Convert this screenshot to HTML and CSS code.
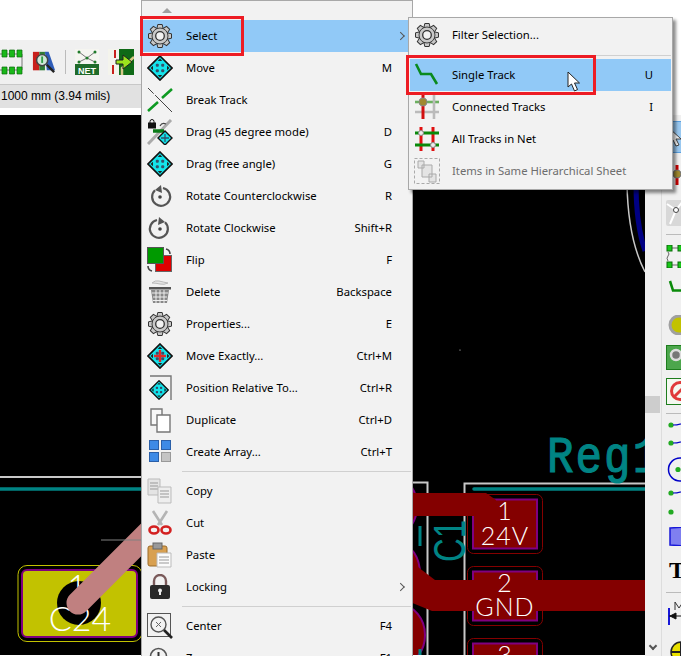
FILE: index.html
```html
<!doctype html>
<html>
<head>
<meta charset="utf-8">
<title>PCB editor - context menu</title>
<link rel="stylesheet" href="styles.css">
</head>
<body>
<!-- icons used more than once -->
<svg class="defs" width="0" height="0">
	<path id="tooth" d="M9.800 6 10.800 1.500H15.200L16.200 6Z"/>
	<symbol id="gear" viewBox="0 0 26 26">
		<g class="gear-teeth">
			<use href="#tooth"/>
			<use href="#tooth" transform="rotate(45 13 13)"/>
			<use href="#tooth" transform="rotate(90 13 13)"/>
			<use href="#tooth" transform="rotate(135 13 13)"/>
			<use href="#tooth" transform="rotate(180 13 13)"/>
			<use href="#tooth" transform="rotate(225 13 13)"/>
			<use href="#tooth" transform="rotate(270 13 13)"/>
			<use href="#tooth" transform="rotate(315 13 13)"/>
		</g>
		<circle cx="13" cy="13" r="8" class="gear-body"/>
		<circle cx="13" cy="13" r="4.300" class="gear-hole"/>
	</symbol>
	<symbol id="move" viewBox="0 0 26 26">
		<path d="M13 1 25 13 13 25 1 13Z" fill="#14e4ec" stroke="#111" stroke-width="1.700"/>
		<path d="M13 3.500 15.200 6H10.800ZM13 22.500 15.200 20H10.800ZM3.500 13 6 10.800V15.200ZM22.500 13 20 10.800V15.200Z" fill="#222"/>
		<rect x="8.800" y="8.800" width="3" height="3" rx="1" fill="#35506a"/>
		<rect x="14.200" y="8.800" width="3" height="3" rx="1" fill="#35506a"/>
		<rect x="8.800" y="14.200" width="3" height="3" rx="1" fill="#35506a"/>
		<rect x="14.200" y="14.200" width="3" height="3" rx="1" fill="#35506a"/>
	</symbol>
	<symbol id="spin" viewBox="0 0 26 26">
		<path d="M8 7.200A9 9 0 1 0 16 5" fill="none" stroke="#555" stroke-width="2.200"/>
		<circle cx="13" cy="14" r="1.800" fill="#444"/>
	</symbol>
	<symbol id="wire" viewBox="0 0 20 10">
		<circle cx="5" cy="5" r="2.600" fill="#22aa22"/>
		<path d="M7 5q6 0 13-3" fill="none" stroke="#0000c8" stroke-width="1.200"/>
	</symbol>
</svg>

<div class="app">
	<div class="top"></div>
	<div class="toolbar">
		<svg class="tool tool-cut" viewBox="0 0 23 26">
			<path d="M-2 5H22V21H-2" fill="none" stroke="#777"/>
			<path d="M2 1H7V8H2ZM9.500 1H14.500V8H9.500ZM17 1H22V8H17ZM2 18H7V25H2ZM9.500 18H14.500V25H9.500ZM17 18H22V25H17Z" fill="#1ab81a" stroke="#0a6a0a" stroke-width=".7"/>
		</svg>
		<svg class="tool" viewBox="0 0 26 26">
			<path d="M1 2H8V22H1Z" fill="#c8201c"/>
			<path d="M8 2H14V22H8Z" fill="#2f7d36"/>
			<path d="M14 2H18L25 22H16Z" fill="#2e5cb8"/>
			<circle cx="11" cy="11" r="6" fill="#cfe8d8" stroke="#444" stroke-width="1.600"/>
			<path d="M11 7V14" stroke="#2f9d46" stroke-width="2"/>
			<path d="M16 16 24 24" stroke="#222" stroke-width="2.600"/>
		</svg>
		<span class="tool-sep"></span>
		<svg class="tool" viewBox="0 0 24 26">
			<path d="M0 0H24V26H0Z" fill="#f5f5f0"/>
			<path d="M4 3 12 9 20 3M4 13 12 9 20 13" fill="none" stroke="#777"/>
			<circle cx="4" cy="3" r="1.500" fill="#1f7a2a"/><circle cx="20" cy="3" r="1.500" fill="#1f7a2a"/><circle cx="12" cy="9" r="1.500" fill="#1f7a2a"/><circle cx="4" cy="13" r="1.500" fill="#1f7a2a"/><circle cx="20" cy="13" r="1.500" fill="#1f7a2a"/>
			<path d="M0 15H24V26H0Z" fill="#1f6b2a"/>
			<text x="12" y="24.500" class="net-text">NET</text>
		</svg>
		<svg class="tool tool-wide" viewBox="0 0 26 26">
			<path d="M0 0H26V26H0Z" fill="#0f6a17"/>
			<path d="M0 0H11V26H0Z" fill="#f4f4ec"/>
			<path d="M7 1V9M5 16V25" stroke="#c8201c" stroke-width="2"/>
			<path d="M14 26V19L26 8" fill="none" stroke="#d8c98a" stroke-width="2.500"/>
			<path d="M8 11H15V6L24 13 15 20V15H8Z" fill="#9be21d" stroke="#222"/>
		</svg>
	</div>
	<div class="status">1000 mm (3.94 mils)</div>
	<div class="gap"></div>
	<div class="main">
		<svg class="board" viewBox="0 116 645 540">
			<rect x="0" y="116" width="645" height="540" fill="#000"/>
			<circle cx="460" cy="351" r=".6" fill="#ddd"/>
			<path d="M627 185Q628 240 645 273" fill="none" stroke="#c8c8c8" stroke-width="1.500"/>
			<path d="M636 185Q636 225 645 252" fill="none" stroke="#000084" stroke-width="5"/>

			<ellipse cx="400" cy="507" rx="17" ry="26" fill="#840000" stroke="#800080" stroke-width="2"/>
			<ellipse cx="400" cy="575" rx="20" ry="30" fill="#840000" stroke="#800080" stroke-width="2"/>
			<ellipse cx="400" cy="636" rx="25" ry="30" fill="#840000" stroke="#800080" stroke-width="2"/>
			<path d="M0 478H141M410 483.500H427.500V656M464.500 656V484.500H645" fill="none" stroke="#c8c8c8" stroke-width="2"/>
			<path d="M0 490H141M474 490H645" fill="none" stroke="#008484" stroke-width="3.500" stroke-linecap="round"/>
			<path d="M420 527V547M420 650V656" stroke="#008484" stroke-width="3"/>
			<text transform="translate(547 473) scale(.85 1)" class="reg">Reg1</text>
			<text transform="translate(465 563) rotate(-90) scale(.75 1)" class="ref">C1</text>

			<rect x="18" y="566.500" width="124" height="76" rx="9" fill="none" stroke="#c2c200"/>
			<rect x="22" y="571" width="115" height="67" rx="5" fill="#c2c200" stroke="#800080" stroke-width="2"/>
			<circle cx="79" cy="604" r="22" fill="#000"/>
			<text x="77" y="600" class="pad-text">1</text>
			<text x="80" y="632" class="pad-text">C24</text>
			<path d="M78 604 160 522" stroke="#c08080" stroke-width="23" stroke-linecap="round"/>
			<path d="M101 541H141" stroke="#808080"/>

			<rect x="467.500" y="495.500" width="75" height="59" rx="6" fill="none" stroke="#840000"/>
			<rect x="473" y="500.500" width="64" height="49" fill="#840000" stroke="#800080" stroke-width="2"/>
			<rect x="467.500" y="567.500" width="75" height="59" rx="6" fill="none" stroke="#840000"/>
			<rect x="473" y="572.500" width="64" height="49" fill="#840000" stroke="#800080" stroke-width="2"/>
			<rect x="467.500" y="639.500" width="75" height="59" rx="6" fill="none" stroke="#840000"/>
			<rect x="473" y="644.500" width="64" height="49" fill="#840000" stroke="#800080" stroke-width="2"/>
			<path d="M410 494H486L496 501V517H410Z" fill="#840000"/>
			<path d="M410 562 435 581H645V612H432L410 603Z" fill="#840000"/>
			<text x="505" y="521" class="pad-text small">1</text>
			<text x="505" y="546" class="pad-text small">24V</text>
			<text x="505" y="593" class="pad-text small">2</text>
			<text x="505" y="617" class="pad-text small">GND</text>
			<text x="505" y="665" class="pad-text small">3</text>
		</svg>
		<div class="scroll">
			<span class="thumb"></span>
			<span class="scroll-down"></span>
		</div>
		<div class="side"></div>
	</div>
</div>

<div class="sidetools">
	<span class="side-on">
		<svg class="cursor-mini" viewBox="0 0 14 20"><path d="M1 1V16L5 13 8 19 11 18 8 12H13Z" fill="#fff" stroke="#444"/></svg>
	</span>
	<svg class="st via-red" viewBox="0 0 20 20"><path d="M11 0V20" stroke="#c00" stroke-width="3"/><circle cx="11" cy="9" r="4" fill="#a08a30" stroke="#777"/></svg>
	<svg class="st tune" viewBox="0 0 20 26"><rect x="0" y="0" width="24" height="26" rx="2" fill="#d8d8d8"/><path d="M10 10 17 1M10 10 1 4M10 10 4 24" stroke="#fff" stroke-width="2"/><circle cx="10" cy="10" r="2.500" fill="#fff" stroke="#444"/></svg>
	<span class="side-sep sep-a"></span>
	<svg class="st foot" viewBox="0 0 20 23"><path d="M6 3H14M6 20H14M2 7Q4 9 2 11T2 16" fill="none" stroke="#666"/><rect x="1" y="0" width="5" height="6" fill="#18c818" stroke="#0a6a0a"/><rect x="1" y="17" width="5" height="6" fill="#18c818" stroke="#0a6a0a"/><rect x="12" y="0" width="9" height="6" fill="#18c818" stroke="#0a6a0a"/><rect x="12" y="17" width="9" height="6" fill="#18c818" stroke="#0a6a0a"/></svg>
	<svg class="st track" viewBox="0 0 20 12"><path d="M4 1 7 10.500H20" fill="none" stroke="#0a8a0a" stroke-width="2.500"/></svg>
	<svg class="st via" viewBox="0 0 20 20"><circle cx="13" cy="10" r="9" fill="#c2c200" stroke="#a0a0a0" stroke-width="3"/></svg>
	<svg class="st pad" viewBox="0 0 20 25"><rect x=".5" y=".5" width="24" height="24" fill="#4ca64c" stroke="#1d7d1d"/><circle cx="10" cy="10" r="5" fill="#777" stroke="#ddd" stroke-width="2.500"/></svg>
	<svg class="st nope" viewBox="0 0 20 27"><rect x=".5" y=".5" width="24" height="26" fill="#f4f8f0" stroke="#1d7d1d"/><circle cx="14" cy="13" r="8.500" fill="none" stroke="#e03a3a" stroke-width="3"/><path d="M8 19 20 7" stroke="#e03a3a" stroke-width="3"/></svg>
	<span class="side-sep sep-b"></span>
	<svg class="st wire wire-a"><use href="#wire"/></svg>
	<svg class="st wire"><use href="#wire"/></svg>
	<svg class="st ring" viewBox="0 0 20 25"><circle cx="14" cy="12.500" r="11.500" fill="none" stroke="#0000c8" stroke-width="1.500"/><circle cx="12" cy="12.500" r="2.600" fill="#22aa22"/></svg>
	<svg class="st wire wire-c"><use href="#wire"/></svg>
	<svg class="st wire"><circle cx="5" cy="5" r="2.600" fill="#22aa22"/></svg>
	<svg class="st poly" viewBox="0 0 20 19"><path d="M4 1 20 0V19L4 18Z" fill="#7f7ff0" stroke="#1818d8" stroke-width="1.500"/></svg>
	<span class="side-t">T</span>
	<span class="side-sep sep-c"></span>
	<svg class="st dim" viewBox="0 0 20 25"><path d="M3 8V25" stroke="#1818d8" stroke-width="2"/><path d="M3 16H20M4 16 10 13V19Z" stroke="#111" fill="#111"/><path d="M9 10V2L13 8 17 2V10" fill="none" stroke="#333"/></svg>
	<svg class="st aim" viewBox="0 0 20 24"><circle cx="15" cy="12" r="10" fill="#e8e000" stroke="#222" stroke-width="1.500"/><path d="M5 12H20M15 2V20" stroke="#222" stroke-width="2"/></svg>
</div>

<div class="menu main-menu">
	<div class="menu-top"><span class="up"></span></div>
	<div class="item on"><svg class="ico dark"><use href="#gear"/></svg><span>Select</span><span></span><span class="more"></span></div>
	<div class="item"><svg class="ico"><use href="#move"/></svg><span>Move</span><span>M</span><span></span></div>
	<div class="item">
		<svg class="ico" viewBox="0 0 26 26"><path d="M1 1 25 25" stroke="#444" stroke-dasharray="8 2 40"/><path d="M1 24 11 15M15 11 25 2" stroke="#0e9a22" stroke-width="2.600"/></svg>
		<span>Break Track</span><span></span><span></span>
	</div>
	<div class="item">
		<svg class="ico" viewBox="0 0 26 26"><path d="M1 25 24 1" stroke="#aaa" stroke-width="3"/><path d="M6 12H17" stroke="#0a7a18" stroke-width="3.500"/><path d="M1 3.500H9V9.500H1Z" fill="#111"/><path d="M3 4V2.500A2 2 0 0 1 7 2.500V4" fill="none" stroke="#111"/><path d="M13 7Q15 3 19 5" fill="none" stroke="#444" stroke-width="1.200"/><path d="M18 12 25 19 18 26 11 19Z" fill="#14e4ec" stroke="#111" stroke-width="1.400"/><path d="M18 15V23M14 19H22" stroke="#35506a" stroke-width="1.300"/></svg>
		<span>Drag (45 degree mode)</span><span>D</span><span></span>
	</div>
	<div class="item"><svg class="ico"><use href="#move"/></svg><span>Drag (free angle)</span><span>G</span><span></span></div>
	<div class="item">
		<svg class="ico" viewBox="0 0 26 26"><use href="#spin" width="26" height="26"/><path d="M14 2 8 7 15 10Z" fill="#555"/></svg>
		<span>Rotate Counterclockwise</span><span>R</span><span></span>
	</div>
	<div class="item">
		<svg class="ico" viewBox="0 0 26 26"><use href="#spin" width="26" height="26" transform="matrix(-1 0 0 1 26 0)"/><path d="M12 2 18 7 11 10Z" fill="#555"/></svg>
		<span>Rotate Clockwise</span><span>Shift+R</span><span></span>
	</div>
	<div class="item">
		<svg class="ico" viewBox="0 0 26 26"><rect x="8.500" y="8.500" width="16" height="16" fill="#e00000" stroke="#666"/><rect x=".5" y=".5" width="16" height="16" fill="#009a00" stroke="#555"/><path d="M19 2Q23 3 23 7M5 24Q1 23 1 19" fill="none" stroke="#444" stroke-width="1.600"/></svg>
		<span>Flip</span><span>F</span><span></span>
	</div>
	<div class="item">
		<svg class="ico" viewBox="0 0 26 26"><path d="M5 4Q8 1 12 2T21 4Q17 6 13 5T5 4Z" fill="#e6e6e6" stroke="#bbb"/><path d="M2 8H24V10.500H2Z" fill="#555"/><path d="M4 11H22L20 24H6Z" fill="#888"/><path d="M5 14H21M6 18H20M6 21.500H20M9 11V24M13 11V24M17 11V24" stroke="#eee"/></svg>
		<span>Delete</span><span>Backspace</span><span></span>
	</div>
	<div class="item"><svg class="ico light"><use href="#gear"/></svg><span>Properties...</span><span>E</span><span></span></div>
	<div class="item">
		<svg class="ico" viewBox="0 0 26 26"><use href="#move" width="26" height="26"/><path d="M13 7V19M7 13H19" stroke="#e02828" stroke-width="2.400"/></svg>
		<span>Move Exactly...</span><span>Ctrl+M</span><span></span>
	</div>
	<div class="item">
		<svg class="ico" viewBox="0 0 26 26"><path d="M3 1H24V25" fill="none" stroke="#777" stroke-width="1.400"/><use href="#move" x="2" y="5" width="20" height="20"/></svg>
		<span>Position Relative To...</span><span>Ctrl+R</span><span></span>
	</div>
	<div class="item">
		<svg class="ico" viewBox="0 0 26 26"><path d="M4 2H15V18H4Z" fill="#f8f8f8" stroke="#777" stroke-width="1.400"/><path d="M10 8H23V25H10Z" fill="#fff" stroke="#777" stroke-width="1.400"/></svg>
		<span>Duplicate</span><span>Ctrl+D</span><span></span>
	</div>
	<div class="item">
		<svg class="ico" viewBox="0 0 26 26"><rect x="2.500" y="1.500" width="9" height="9" fill="#3d8ae6" stroke="#2a5fa8"/><rect x="14.500" y="1.500" width="9" height="9" fill="#3d8ae6" stroke="#2a5fa8"/><rect x="2.500" y="13.500" width="9" height="9" fill="#3d8ae6" stroke="#2a5fa8"/><rect x="14.500" y="13.500" width="9" height="9" fill="#c4c4c4" stroke="#999"/></svg>
		<span>Create Array...</span><span>Ctrl+T</span><span></span>
	</div>
	<div class="sep"></div>
	<div class="item">
		<svg class="ico" viewBox="0 0 26 26"><path d="M1 1H13V17H1Z" fill="#e4e4e4" stroke="#bbb"/><path d="M3 5H11M3 8H11M3 11H11" stroke="#999"/><path d="M11 9H24V25H11Z" fill="#eee" stroke="#bbb"/><path d="M13 13H22M13 16H22M13 19H22" stroke="#999"/></svg>
		<span>Copy</span><span></span><span></span>
	</div>
	<div class="item">
		<svg class="ico" viewBox="0 0 26 26"><path d="M6 1 15 15M20 1 11 15" stroke="#b4b4b4" stroke-width="2.600"/><ellipse cx="7" cy="20" rx="4.500" ry="3.500" fill="none" stroke="#d32020" stroke-width="2.600"/><ellipse cx="19" cy="20" rx="4.500" ry="3.500" fill="none" stroke="#d32020" stroke-width="2.600"/></svg>
		<span>Cut</span><span></span><span></span>
	</div>
	<div class="item">
		<svg class="ico" viewBox="0 0 26 26"><rect x="1" y="4" width="19" height="20" rx="2" fill="#d8a050" stroke="#9a6a28"/><rect x="6" y="1" width="9" height="6" fill="#999" stroke="#666"/><path d="M10 11H24V25H10Z" fill="#fbfbfb" stroke="#bbb"/><path d="M12 15H22M12 18H22M12 21H22" stroke="#999"/></svg>
		<span>Paste</span><span></span><span></span>
	</div>
	<div class="item">
		<svg class="ico" viewBox="0 0 26 26"><path d="M7 11V7A6 6 0 0 1 19 7V11" fill="none" stroke="#7a5a5a" stroke-width="2.400"/><rect x="3" y="11" width="20" height="14" rx="2" fill="#2a2a2a"/><circle cx="13" cy="16.500" r="2" fill="#eee"/><path d="M12 17H14V21H12Z" fill="#eee"/></svg>
		<span>Locking</span><span></span><span class="more"></span>
	</div>
	<div class="sep"></div>
	<div class="item">
		<svg class="ico" viewBox="0 0 26 26"><rect x=".5" y=".5" width="23" height="23" fill="none" stroke="#555"/><circle cx="11.500" cy="11.500" r="7.500" fill="none" stroke="#555" stroke-width="1.400"/><path d="M9 9 14 14M14 9 9 14" stroke="#666"/><path d="M17 17 25 25" stroke="#222" stroke-width="2.600"/></svg>
		<span>Center</span><span>F4</span><span></span>
	</div>
	<div class="item">
		<svg class="ico" viewBox="0 0 26 26"><circle cx="11.500" cy="11.500" r="8" fill="none" stroke="#555" stroke-width="1.600"/><path d="M11.500 7V12" stroke="#333" stroke-width="2"/></svg>
		<span>Zoom</span><span>F1</span><span></span>
	</div>
</div>

<div class="menu sub-menu">
	<div class="item"><svg class="ico dark"><use href="#gear"/></svg><span>Filter Selection...</span><span></span><span></span></div>
	<div class="sep"></div>
	<div class="item on">
		<svg class="ico" viewBox="0 0 26 26"><path d="M2 2 7 12H17L23 22" fill="none" stroke="#0a8a1e" stroke-width="2.600"/></svg>
		<span>Single Track</span><span>U</span><span></span>
	</div>
	<div class="item">
		<svg class="ico" viewBox="0 0 26 26"><path d="M1 8H25" stroke="#6cb060" stroke-width="2.600"/><path d="M1 18H25M20 1V25" stroke="#bbb" stroke-width="2.600"/><path d="M9 1V25" stroke="#d21010" stroke-width="3"/><circle cx="9" cy="8" r="4" fill="#a08a30" stroke="#888"/></svg>
		<span>Connected Tracks</span><span>I</span><span></span>
	</div>
	<div class="item">
		<svg class="ico" viewBox="0 0 26 26"><path d="M7 1V25M19 1V25" stroke="#e01010" stroke-width="3"/><path d="M1 7H25M1 19H25" stroke="#0a8a0a" stroke-width="3"/><circle cx="7" cy="7" r="2.500" fill="#eee" stroke="#888"/><circle cx="19" cy="19" r="2.500" fill="#eee" stroke="#888"/></svg>
		<span>All Tracks in Net</span><span></span><span></span>
	</div>
	<div class="item off">
		<svg class="ico" viewBox="0 0 26 26"><path d="M.5 .5H25.500V25.500H.5Z" fill="none" stroke="#aaa" stroke-dasharray="3 2"/><path d="M4 3H10V10H4ZM8 7H18V19H8ZM15 16H22V24H15Z" fill="#e4e4e4" stroke="#aaa"/></svg>
		<span>Items in Same Hierarchical Sheet</span><span></span><span></span>
	</div>
</div>

<span class="mark mark-select"></span>
<span class="mark mark-track"></span>
<svg class="cursor" viewBox="0 0 14 21"><path d="M1 1V16L4.500 13 7.500 20 10.500 18.500 7.500 12H12.500Z" fill="#fff" stroke="#222"/></svg>
</body>
</html>
```

FILE: styles.css
```css
* {margin:0; padding:0; box-sizing:border-box;}

html, body {width:681px; height:656px; overflow:hidden;}
body {position:relative; background:#fff; font:11.3px "Noto Sans", "Liberation Sans", sans-serif; color:#000;}

.defs {position:absolute;}

.app {display:flex; flex-direction:column; height:656px;}
.top {height:40px;}
.toolbar {display:flex; align-items:center; width:420px; height:45px; background:#f0f0f0; border-bottom:1px solid #c8c8c8; gap:9px;}
.tool {width:24px; height:26px; flex:none;}
.tool-cut {width:23px;}
.tool-wide {width:26px;}
.tool-sep {width:1px; height:24px; background:#bbb;}
.net-text {font:bold 9px "Liberation Sans", sans-serif; fill:#fff; text-anchor:middle;}
.status {width:420px; height:23px; padding-left:1px; background:#e1e1e1; font:12px/23px "Liberation Sans", sans-serif;}
.gap {height:7px;}

.main {display:flex; flex:1; min-height:0;}
.board {width:645px; height:540px; flex:none; display:block;}
.scroll {width:16px; background:#f0f0f0; position:relative;}
.thumb {position:absolute; left:0; top:281px; width:15px; height:17px; background:#cdcdcd;}
.scroll-down {position:absolute; left:5px; top:528px; width:6px; height:6px; border:solid #555; border-width:0 2px 2px 0; transform:rotate(45deg);}
.side {flex:1; background:#f0f0f0; border-left:1px solid #ddd;}

/* right hand toolbar, the window cuts it off */
.sidetools {position:absolute; left:666px; top:121px; width:15px; height:535px; overflow:hidden; display:flex; flex-direction:column;}
.side-on {display:block; width:15px; height:32px; background:#99c8f0; border:solid #5aa0e0; border-width:1px 0; flex:none;}
.cursor-mini {width:14px; height:20px; margin:5px 0 0 2px; display:block;}
.st {width:20px; flex:none; display:block;}
.via-red {height:20px; margin-top:12px;}
.tune {height:26px; margin-top:15px;}
.foot {height:23px; margin-top:10px;}
.track {height:12px; margin-top:12px;}
.via {height:20px; margin-top:23px;}
.pad {height:25px; margin-top:10px;}
.nope {height:27px; margin-top:8px;}
.wire {height:10px; margin-top:8px;}
.wire-a {margin-top:6px;}
.ring {height:25px; margin-top:9px;}
.wire-c {margin-top:6px;}
.wire-c + .wire {margin-top:9px;}
.poly {height:19px; margin-top:10px;}
.dim {height:25px; margin-top:7px;}
.aim {height:24px; margin-top:15px;}
.side-sep {height:1px; background:#bbb; flex:none;}
.sep-a {margin-top:8px;}
.sep-b {margin-top:8px;}
.sep-c {margin-top:12px;}
.side-t {font:bold 24px/20px "Liberation Serif", serif; height:20px; margin:14px 0 0 3px; flex:none;}

.reg {font:52px "Liberation Mono", monospace; letter-spacing:2.400px; fill:#008484; stroke:#008484; stroke-width:1.200;}
.ref {font:44px "Liberation Sans", sans-serif; fill:#008484;}
.pad-text {font:300 34px Lato, "Liberation Sans", sans-serif; fill:#fff; text-anchor:middle;}
.pad-text.small {font-size:25px; letter-spacing:1px;}

.menu {position:absolute; background:#f2f2f2; border:1px solid #a8a8a8;}
.main-menu {left:141px; top:0; width:272px; padding:0 1px;}
.sub-menu {left:408px; top:17px; width:265px; height:173px; padding:1px; box-shadow:3px 3px 3px rgba(0,0,0,.45);}

.menu-top {height:19px; position:relative;}
.up {position:absolute; left:19px; top:7px; border:5px solid transparent; border-top:0; border-bottom-color:#a0a0a0;}

.item {display:grid; height:32px; align-items:center; line-height:30px;}
.main-menu .item {grid-template-columns:43px 1fr auto 19px;}
.sub-menu .item {grid-template-columns:42px 1fr auto 18px;}
.item.on {background:#91c9f7;}
.item.off {color:#6d6d6d;}
.ico {width:26px; height:26px; margin-left:4px;}
.more {justify-self:center; width:6px; height:6px; border:solid #555; border-width:1px 1px 0 0; transform:rotate(45deg) translate(-1px, 1px);}
.sep {height:7px; margin-left:39px; position:relative;}
.sep:after {content:""; position:absolute; left:0; right:0; top:3px; height:1px; background:#d0d0d0;}
.sub-menu .sep {height:8px; margin-left:0;}
.sub-menu .sep:after {top:4px;}

.gear-teeth, .gear-body, .gear-hole {stroke:#333; fill:#c8c8c8;}
.gear-body {stroke-width:.9;}
.gear-hole {fill:#f2f2f2; stroke-width:1.300;}
.light .gear-teeth, .light .gear-body, .light .gear-hole {stroke:#808080;}
.light .gear-teeth, .light .gear-body {fill:#d4d4d4;}

.mark {position:absolute; border:3px solid #ed1c24;}
.mark-select {left:140px; top:16px; width:104px; height:40px;}
.mark-track {left:406px; top:55px; width:190px; height:40px;}
.cursor {position:absolute; left:567px; top:71px; width:14px; height:21px;}
```
